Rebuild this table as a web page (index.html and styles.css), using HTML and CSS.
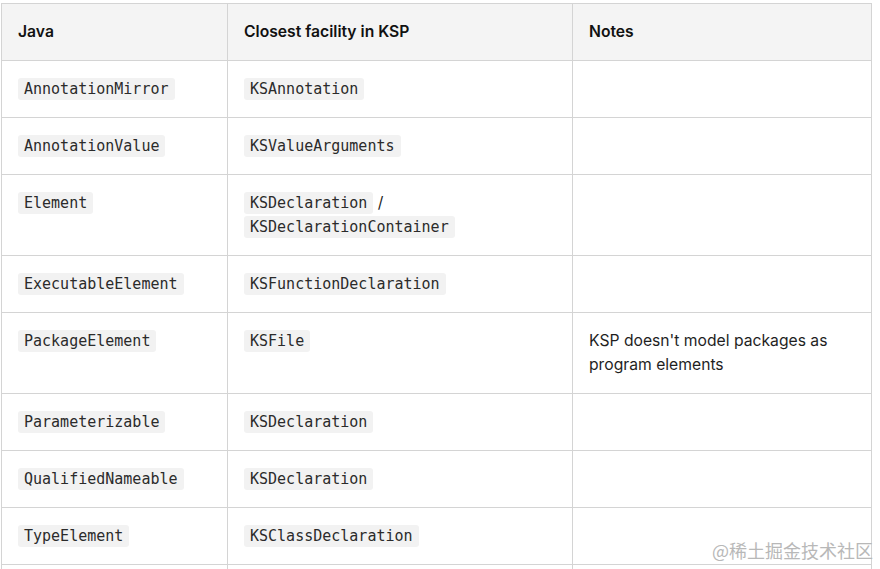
FILE: index.html
```html
<!DOCTYPE html>
<html>
<head>
<meta charset="utf-8">
<link rel="stylesheet" href="styles.css">
</head>
<body>
<table class="map">
  <colgroup>
    <col class="c1"><col class="c2"><col class="c3">
  </colgroup>
  <thead>
    <tr><th>Java</th><th>Closest facility in KSP</th><th>Notes</th></tr>
  </thead>
  <tbody>
    <tr><td><code>AnnotationMirror</code></td><td><code>KSAnnotation</code></td><td></td></tr>
    <tr><td><code>AnnotationValue</code></td><td><code>KSValueArguments</code></td><td></td></tr>
    <tr><td><code>Element</code></td><td><code>KSDeclaration</code> / <code>KSDeclarationContainer</code></td><td></td></tr>
    <tr><td><code>ExecutableElement</code></td><td><code>KSFunctionDeclaration</code></td><td></td></tr>
    <tr><td><code>PackageElement</code></td><td><code>KSFile</code></td><td>KSP doesn't model packages as program elements</td></tr>
    <tr><td><code>Parameterizable</code></td><td><code>KSDeclaration</code></td><td></td></tr>
    <tr><td><code>QualifiedNameable</code></td><td><code>KSDeclaration</code></td><td></td></tr>
    <tr><td><code>TypeElement</code></td><td><code>KSClassDeclaration</code></td><td></td></tr>
    <tr class="more"><td>&nbsp;</td><td>&nbsp;</td><td>&nbsp;</td></tr>
  </tbody>
</table>
<div class="watermark">@稀土掘金技术社区</div>
</body>
</html>
```
FILE: styles.css
```css
html { overflow: hidden; }
body {
  margin: 3px 0 0 1px;
  background: #fff;
  font-family: Inter, "Noto Sans", sans-serif;
  color: #1f1f1f;
}
.map {
  border-collapse: collapse;
  table-layout: fixed;
  width: 870px;
  font-size: 15.7px;
  line-height: 24px;
}
.c1 { width: 226px; }
.c2 { width: 345px; }
.c3 { width: 299px; }
.map th, .map td {
  border: 1px solid #d4d4d4;
  padding: 16px 16px;
  text-align: left;
  vertical-align: top;
}
.map th {
  background: #f4f4f4;
  font-weight: 600;
  color: #111;
}
.map code {
  font-family: "DejaVu Sans Mono", monospace;
  font-size: 15px;
  background: #f2f2f2;
  color: #2b2b2b;
  padding: 2px 6px;
  border-radius: 3px;
}
.watermark {
  position: absolute;
  right: 7px;
  top: 538px;
  font-family: "Noto Sans CJK SC", sans-serif;
  font-size: 18px;
  line-height: 24px;
  color: #b8b8b8;
}
```
